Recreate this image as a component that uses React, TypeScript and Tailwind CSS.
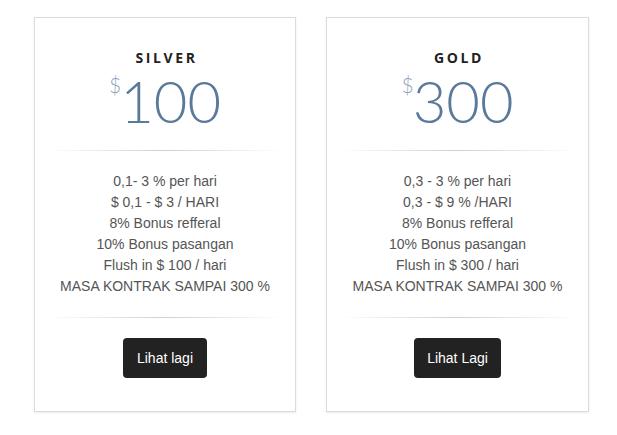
import React from "react";

type Plan = { name: string; price: string; features: string[]; cta: string };

const plans: Plan[] = [
  {
    name: "SILVER",
    price: "100",
    features: [
      "0,1- 3 % per hari",
      "$ 0,1 - $ 3 / HARI",
      "8% Bonus refferal",
      "10% Bonus pasangan",
      "Flush in $ 100 / hari",
      "MASA KONTRAK SAMPAI 300 %",
    ],
    cta: "Lihat lagi",
  },
  {
    name: "GOLD",
    price: "300",
    features: [
      "0,3 - 3 % per hari",
      "0,3 - $ 9 % /HARI",
      "8% Bonus refferal",
      "10% Bonus pasangan",
      "Flush in $ 300 / hari",
      "MASA KONTRAK SAMPAI 300 %",
    ],
    cta: "Lihat Lagi",
  },
];

function Divider() {
  return (
    <div className="mx-[13px] h-px bg-[linear-gradient(to_right,rgba(200,200,200,0),#cfcfcf_50%,rgba(200,200,200,0))]" />
  );
}

function Card({ plan, width }: { plan: Plan; width: string }) {
  return (
    <div
      className={`${width} h-[395px] bg-white border border-[#d9dcdf] shadow-[0_1px_2px_rgba(0,0,0,0.08)] flex flex-col pt-[30px]`}
    >
      <div className="text-center text-[14px] leading-[20px] font-bold tracking-[2.6px] pl-[3px] text-[#222] [font-family:'Open_Sans',sans-serif]">
        {plan.name}
      </div>
      <div className="mt-[4px] flex justify-center items-start text-[#5b7a9b] [font-family:Lato,sans-serif] font-light">
        <span className="text-[21px] leading-[21px] mt-[2px] -mr-[1px] text-[#8fa3ba]">$</span>
        <span className="text-[58px] leading-[56px] pt-[1px]">{plan.price}</span>
      </div>
      <div className="mt-[21px]">
        <Divider />
      </div>
      <ul className="mt-[20px] mb-[20px] text-center text-[14px] leading-[21px] text-[#555] [font-family:'Liberation_Sans',Arial,sans-serif]">
        {plan.features.map((f) => (
          <li key={f}>{f}</li>
        ))}
      </ul>
      <Divider />
      <div className="mt-[20px] flex justify-center">
        <button className="h-[40px] px-[13.5px] rounded-[4px] bg-[#222] text-white text-[14px] [font-family:'Liberation_Sans',Arial,sans-serif]">
          {plan.cta}
        </button>
      </div>
    </div>
  );
}

export default function App() {
  return (
    <div className="w-[617px] h-[435px] bg-white flex items-start pl-[34px] pt-[17px] gap-[30px]">
      <Card plan={plans[0]} width="w-[262px]" />
      <Card plan={plans[1]} width="w-[263px]" />
    </div>
  );
}
